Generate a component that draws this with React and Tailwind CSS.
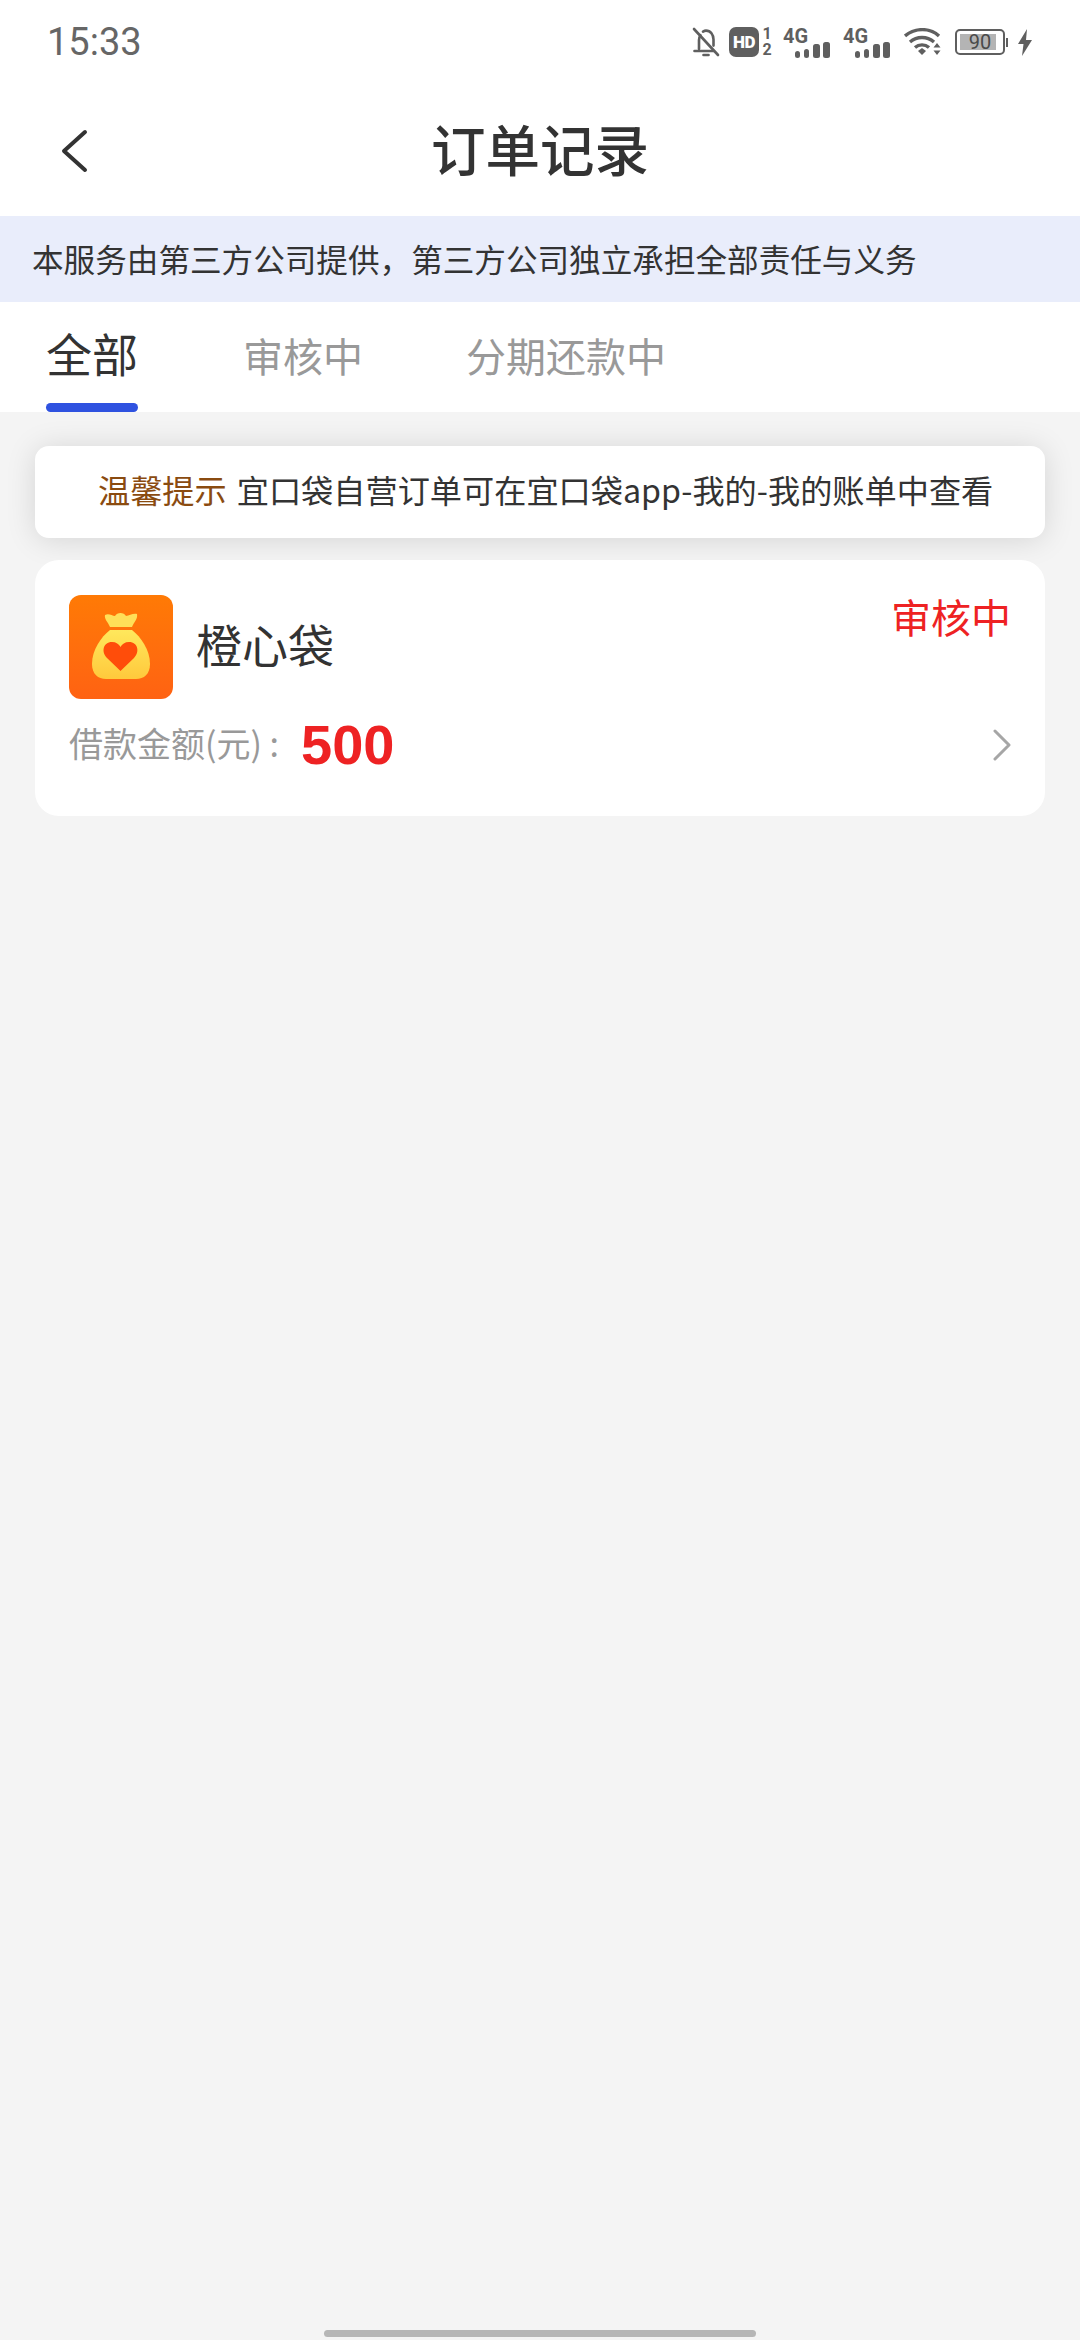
const cjk = { fontFamily: '"Noto Sans CJK SC", sans-serif' };

function Signal() {
  return (
    <svg width="48" height="36" viewBox="0 0 48 36" fill="#5f5f5f">
      <text x="0" y="19" fontFamily="Roboto, sans-serif" fontWeight="700" fontSize="20">4G</text>
      <rect x="12" y="27" width="5" height="7" rx="2.5" />
      <rect x="21" y="25" width="5" height="9" rx="2.5" />
      <rect x="30" y="20" width="7" height="14" rx="2.5" />
      <rect x="40" y="18" width="7" height="16" rx="2.5" />
    </svg>
  );
}

function StatusIcons() {
  return (
    <div className="flex items-center">
      <svg width="28" height="30" viewBox="0 0 28 30" fill="none" stroke="#5f5f5f" strokeWidth="2.6" strokeLinecap="round">
        <path d="M7 22V13c0-2 .6-3.500 1.500-4.800M11 4.600C12 4 13 3.600 14 3.600c4.600 0 7.500 4 7.500 9v6" />
        <path d="M2.500 24h19" />
        <path d="M2 2l24 26" />
        <path d="M11.500 28h5" />
      </svg>
      <div className="ml-[9px] flex h-[30px] w-[30px] items-center justify-center rounded-[7px] bg-[#5f5f5f] text-[17px] font-black leading-none tracking-[-0.5px] text-white" style={{ fontFamily: 'Roboto, sans-serif' }}>HD</div>
      <div className="ml-[1px] flex w-[14px] flex-col items-center text-[16px] font-bold leading-[16px] text-[#5f5f5f]" style={{ fontFamily: 'Roboto, sans-serif' }}>
        <span>1</span>
        <span>2</span>
      </div>
      <div className="ml-[9px]"><Signal /></div>
      <div className="ml-[12px]"><Signal /></div>
      <svg className="ml-[13px]" width="38" height="28" viewBox="0 0 38 28" fill="none" stroke="#5f5f5f" strokeWidth="3.4">
        <path d="M1 8c10-8.500 25-8.500 34 0" />
        <path d="M6 14c7-6 17-6 24 0" />
        <path d="M11 19.500c4-3.500 10-3.500 14 0" />
        <path d="M14 23l4-3 4 3-4 4z" fill="#5f5f5f" stroke="none" />
        <path d="M33 15l3.500 4.500h-7zM33 27l3.500-4.500h-7z" fill="#5f5f5f" stroke="none" />
      </svg>
      <div className="ml-[13px] flex items-center">
        <div className="relative flex h-[26px] w-[50px] items-center rounded-[5px] border-2 border-[#5f5f5f] p-[3px]">
          <div className="h-full w-[90%] bg-[#b4b4b4]" />
          <span className="absolute inset-0 flex items-center justify-center text-[20px] leading-none text-[#4a4a4a]" style={{ fontFamily: 'Roboto, sans-serif' }}>90</span>
        </div>
        <div className="ml-[1px] h-[9px] w-[2px] bg-[#5f5f5f]" />
      </div>
      <svg className="ml-[10px]" width="14" height="27" viewBox="0 0 14 27" fill="#5f5f5f">
        <path d="M9 0L0 15h5.500L4 27l10-16H8z" />
      </svg>
    </div>
  );
}

function BagLogo() {
  return (
    <div className="h-[104px] w-[104px] shrink-0 rounded-[12px] bg-gradient-to-b from-[#ff7a05] to-[#ff6212]">
      <svg width="104" height="104" viewBox="0 0 104 104">
        <defs>
          <linearGradient id="bag" x1="0" y1="0" x2="0" y2="1">
            <stop offset="0" stopColor="#ffe85c" />
            <stop offset="1" stopColor="#ffc93c" />
          </linearGradient>
        </defs>
        <path d="M36 20C40 18 43 21 46 21C48 17 55 17 57 21C60 21 64 18 68 19C69 24 65 27 63 32H41C39 27 35 24 36 20Z" fill="#ffdf58" />
        <path d="M41 35H63C72 42 81 55 81 69C81 79 75 84 67 84H37C29 84 23 79 23 69C23 55 32 42 41 35Z" fill="url(#bag)" />
        <path d="M51.500 76L38 63C32 57 34 47 43 47C47 47 50 49 51.500 52C53 49 56 47 60 47C69 47 71 57 65 63Z" fill="#ff4d0a" />
      </svg>
    </div>
  );
}

export default function App() {
  return (
    <div className="flex min-h-[2340px] flex-col bg-[#f4f4f4]" style={cjk}>
      <div className="bg-white">
        {/* status bar */}
        <div className="flex h-[84px] items-center justify-between pl-[47px] pr-[48px]">
          <span className="text-[38px] leading-none text-[#666666]" style={{ fontFamily: 'Roboto, sans-serif' }}>15:33</span>
          <StatusIcons />
        </div>

        <div className="relative flex h-[132px] items-center justify-center pb-[4px]">
          <svg className="absolute left-[60px] top-[45px]" width="28" height="44" viewBox="0 0 28 44" fill="none" stroke="#333333" strokeWidth="4" strokeLinecap="round" strokeLinejoin="round">
            <path d="M25 3L4 22l21 19" />
          </svg>
          <span className="text-[54.5px] font-medium leading-none text-[#333333]">订单记录</span>
        </div>

        <div className="flex h-[86px] items-center bg-[#e9edfb] pl-[32px] text-[31.6px] text-[#333333]">
          本服务由第三方公司提供，第三方公司独立承担全部责任与义务
        </div>

        <div className="flex h-[110px] pl-[46px]">
          <div className="flex w-[92px] flex-col items-center justify-between">
            <span className="mt-[27px] text-[46px] leading-none text-[#333333]">全部</span>
            <div className="h-[9px] w-[92px] rounded-full bg-[#2f52e0]" />
          </div>
          <span className="ml-[105px] mt-[33px] text-[40px] leading-none text-[#999999]">审核中</span>
          <span className="ml-[103px] mt-[33px] text-[40px] leading-none text-[#999999]">分期还款中</span>
        </div>
      </div>

      <div className="flex flex-col gap-[22px] px-[35px] pt-[34px]">
        <div className="flex h-[92px] items-center rounded-[14px] bg-white pb-[5px] pl-[63px] text-[32.2px] shadow-[0_2px_30px_rgba(0,0,0,0.13)]">
          <span className="text-[#8a4b10]">温馨提示</span>
          <span className="ml-[10px] text-[#333333]">宜口袋自营订单可在宜口袋app-我的-我的账单中查看</span>
        </div>

        <div className="relative h-[256px] rounded-[24px] bg-white pl-[34px] pr-[34px] pt-[35px]">
          <div className="flex items-start">
            <BagLogo />
            <span className="ml-[23px] mt-[25px] text-[46px] leading-none text-[#333333]">橙心袋</span>
            <span className="ml-auto mt-[-4px] text-[40px] leading-[50px] text-[#ee2223]">审核中</span>
          </div>
          <div className="mt-[11px] flex items-center">
            <span className="mb-[4px] text-[34px] leading-none text-[#999999]">借款金额(元) :</span>
            <span className="ml-[22px] text-[56px] font-bold leading-[70px] text-[#ee2223]" style={{ fontFamily: '"Liberation Sans", sans-serif' }}>500</span>
            <svg className="ml-auto" width="18" height="32" viewBox="0 0 18 32" fill="none" stroke="#a6a6a6" strokeWidth="3" strokeLinecap="round" strokeLinejoin="round">
              <path d="M2 2l14 14L2 30" />
            </svg>
          </div>
        </div>
      </div>

      <div className="mt-auto flex justify-center pb-[3px]">
        <div className="h-[7px] w-[432px] rounded-full bg-[#b6b6b6]" />
      </div>
    </div>
  );
}
